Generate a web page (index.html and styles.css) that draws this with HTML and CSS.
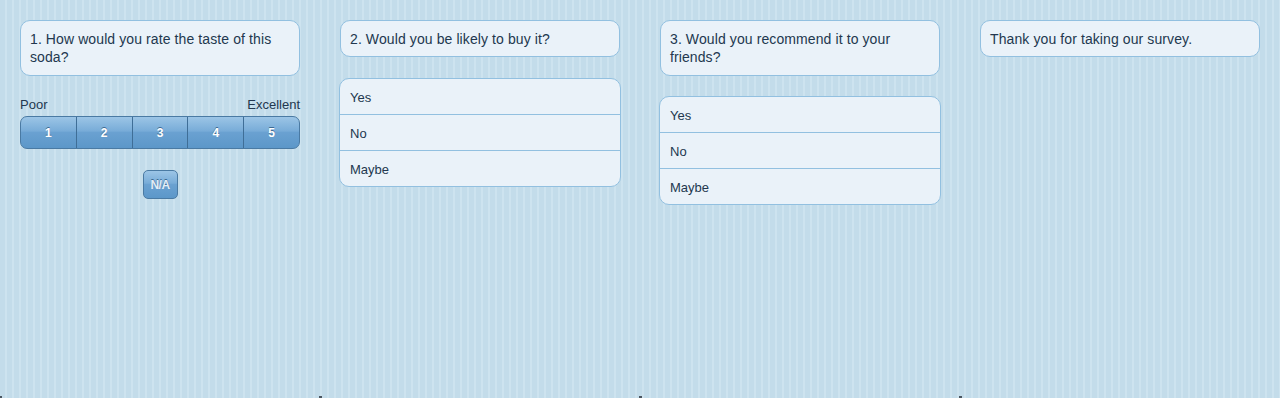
FILE: index.html
```html
<!DOCTYPE html>
<html>
<head>
<meta charset="utf-8">
<link rel="stylesheet" href="styles.css">
</head>
<body>
<div class="survey">
  <section class="col">
    <div class="bubble">1. How would you rate the taste of this soda?</div>
    <div class="scale-labels"><span>Poor</span><span>Excellent</span></div>
    <div class="segmented">
      <button class="seg">1</button>
      <button class="seg">2</button>
      <button class="seg">3</button>
      <button class="seg">4</button>
      <button class="seg">5</button>
    </div>
    <div class="na-row"><button class="na">N/A</button></div>
    <span class="mark"></span>
  </section>
  <section class="col">
    <div class="bubble">2. Would you be likely to buy it?</div>
    <ul class="choices">
      <li>Yes</li>
      <li>No</li>
      <li>Maybe</li>
    </ul>
    <span class="mark"></span>
  </section>
  <section class="col">
    <div class="bubble">3. Would you recommend it to your friends?</div>
    <ul class="choices">
      <li>Yes</li>
      <li>No</li>
      <li>Maybe</li>
    </ul>
    <span class="mark"></span>
  </section>
  <section class="col">
    <div class="bubble">Thank you for taking our survey.</div>
    <span class="mark"></span>
  </section>
</div>
</body>
</html>
```
FILE: styles.css
```css
* { box-sizing: border-box; }
html, body { margin: 0; padding: 0; }
body {
  width: 1280px;
  height: 398px;
  overflow: hidden;
  font-family: "Liberation Sans", Arial, sans-serif;
  color: #22384f;
  background: repeating-linear-gradient(90deg, #c3dcea 0 5px, #cde3ef 5px 7px);
}
.survey {
  display: grid;
  grid-template-columns: repeat(4, 320px);
  height: 398px;
}
.col {
  display: flex;
  flex-direction: column;
  padding: 20px 20px 0 20px;
  height: 398px;
}
.bubble {
  background: #eaf2f9;
  border: 1px solid #92c0e0;
  border-radius: 10px;
  padding: 9px 10px 9px 9px;
  font-size: 14px;
  line-height: 18px;
  width: 280px;
  letter-spacing: 0.1px;
}
.col:last-child .bubble,
.col:nth-child(2) .bubble { padding-bottom: 8px; }
.scale-labels {
  display: flex;
  justify-content: space-between;
  font-size: 13px;
  line-height: 15px;
  margin-top: 21px;
  width: 280px;
}
.segmented {
  display: flex;
  margin-top: 4px;
  width: 280px;
  height: 33px;
  border: 1px solid #4a7aa3;
  border-radius: 7px;
  overflow: hidden;
  background: linear-gradient(#9cc5e6 0%, #78acd8 45%, #6aa1d1 50%, #5c97c9 100%);
}
.seg {
  flex: 1;
  border: 0;
  border-right: 1px solid #3f6e97;
  background: transparent;
  color: #fff;
  font-family: "Liberation Sans", Arial, sans-serif;
  font-weight: bold;
  font-size: 12px;
  text-shadow: 0 -1px 0 #3e6b93;
  padding: 0;
}
.seg:last-child { border-right: 0; }
.na-row {
  display: flex;
  justify-content: center;
  width: 280px;
  margin-top: 21px;
}
.na {
  width: 35px;
  height: 29px;
  border: 1px solid #4a7aa3;
  border-radius: 5px;
  background: linear-gradient(#9cc5e6 0%, #78acd8 45%, #6aa1d1 50%, #5c97c9 100%);
  color: #e3eef7;
  font-family: "Liberation Sans", Arial, sans-serif;
  font-weight: bold;
  font-size: 12px;
  text-shadow: 0 -1px 0 #3e6b93;
  padding: 0;
  letter-spacing: -0.5px;
}
.choices {
  list-style: none;
  margin: 20px 0 0 -1px;
  padding: 0;
  width: 282px;
  background: #eaf2f9;
  border: 1px solid #92c0e0;
  border-radius: 10px;
  overflow: hidden;
}
.col:nth-child(2) .choices { margin-top: 21px; }
.choices li {
  height: 36px;
  line-height: 35px;
  padding: 1px 10px 0 10px;
  font-size: 13px;
  border-top: 1px solid #92c0e0;
}
.choices li:first-child { border-top: 0; height: 35px; }
.mark {
  margin-top: auto;
  margin-left: -21px;
  width: 3px;
  height: 2px;
  background: #4a5560;
}
.col:first-child .mark { margin-left: -20px; width: 2px; }
```
